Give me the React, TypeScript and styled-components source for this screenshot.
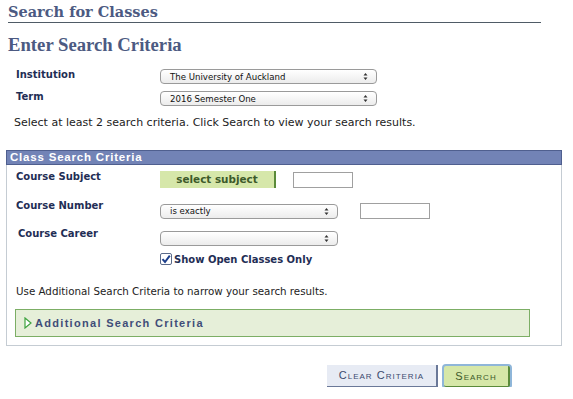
import styled, { createGlobalStyle } from 'styled-components';

const GlobalStyle = createGlobalStyle`
  html, body {
    margin: 0;
    padding: 0;
    background: #fff;
  }
  body {
    font-family: "DejaVu Sans", Verdana, sans-serif;
    color: #222;
  }
`;

interface SelectProps {
  value?: string;
  width: number;
}

const Select = ({ value = '', width }: SelectProps): JSX.Element => (
  <SelectBox $width={width}>
    <SelectText>{value}</SelectText>
    <SelectArrows viewBox="0 0 5 9">
      <path d="M0.5 3.5 L2.5 1 L4.5 3.5 Z M0.5 5.5 L2.5 8 L4.5 5.5 Z" />
    </SelectArrows>
  </SelectBox>
);

const App = (): JSX.Element => {
  return (
    <Page>
      <GlobalStyle />
      <PageTitle>Search for Classes</PageTitle>
      <SubTitle>Enter Search Criteria</SubTitle>

      <TopFields>
        <FieldRow>
          <Label>Institution</Label>
          <Select value="The University of Auckland" width={217} />
        </FieldRow>
        <FieldRow>
          <Label>Term</Label>
          <Select value="2016 Semester One" width={217} />
        </FieldRow>
      </TopFields>

      <Instructions>
        Select at least 2 search criteria. Click Search to view your search results.
      </Instructions>

      <CriteriaBox>
        <BoxHeader>Class Search Criteria</BoxHeader>
        <BoxBody>
          <FieldRow>
            <Label>Course Subject</Label>
            <SubjectButton>select subject</SubjectButton>
            <TextInput $width={60} $offset={17} />
          </FieldRow>
          <FieldRow $top={15}>
            <Label $shift={3}>Course Number</Label>
            <Select value="is exactly" width={178} />
            <TextInput $width={70} $offset={22} />
          </FieldRow>
          <FieldRow $top={12}>
            <Label $indent={2} $shift={3}>Course Career</Label>
            <Select width={178} />
          </FieldRow>
          <CheckRow>
            <CheckBox viewBox="0 0 12 12">
              <rect x="0.5" y="0.5" width="11" height="11" rx="1.5" fill="#fff" stroke="#5a6a8a" />
              <path d="M2.5 6.2 L5 9 L9.8 2.6" fill="none" stroke="#1c3f8c" strokeWidth="2" />
            </CheckBox>
            <CheckLabel>Show Open Classes Only</CheckLabel>
          </CheckRow>
          <Hint>Use Additional Search Criteria to narrow your search results.</Hint>
          <Additional>
            <Triangle viewBox="0 0 8 12">
              <path d="M1 1 L7 6 L1 11 Z" fill="#fff" stroke="#3fa33f" strokeWidth="1.2" />
            </Triangle>
            Additional Search Criteria
          </Additional>
        </BoxBody>
      </CriteriaBox>

      <Actions>
        <ClearButton>Clear Criteria</ClearButton>
        <SearchButton>Search</SearchButton>
      </Actions>
    </Page>
  );
};

export default App;

const Page = styled.div`
  padding: 3px 0 0 8px;
  width: 552px;
`;

const PageTitle = styled.h1`
  border-bottom: 1px solid #4f5b66;
  color: #4c5a82;
  font-family: "DejaVu Serif", Georgia, serif;
  font-size: 14.5px;
  font-weight: bold;
  margin: 0;
  padding-bottom: 2px;
  width: 533px;
`;

const SubTitle = styled.h2`
  color: #4c5a82;
  font-family: "Liberation Serif", "Times New Roman", serif;
  font-size: 18.7px;
  font-weight: bold;
  margin: 11px 0 0;
`;

const TopFields = styled.div`
  display: flex;
  flex-direction: column;
  gap: 7px;
  margin: 13px 0 0 8px;
`;

const FieldRow = styled.div<{ $top?: number }>`
  align-items: center;
  display: flex;
  margin-top: ${(p) => p.$top ?? 0}px;
`;

const Label = styled.div<{ $indent?: number; $shift?: number }>`
  align-self: flex-start;
  box-sizing: border-box;
  color: #1f2e55;
  flex-shrink: 0;
  font-size: 10px;
  font-weight: bold;
  margin-top: -${(p) => p.$shift ?? 0}px;
  padding-left: ${(p) => p.$indent ?? 0}px;
  width: 144px;
`;

const SelectBox = styled.div<{ $width: number }>`
  align-items: center;
  background: linear-gradient(#ffffff, #ececec);
  border: 1px solid #9a9a9a;
  border-radius: 4px;
  box-sizing: border-box;
  display: flex;
  height: 15px;
  justify-content: space-between;
  padding: 0 8px 0 9px;
  width: ${(p) => p.$width}px;
`;

const SelectText = styled.span`
  color: #111;
  font-size: 8.6px;
`;

const SelectArrows = styled.svg`
  fill: #333;
  height: 9px;
  width: 5px;
`;

const Instructions = styled.p`
  font-size: 11px;
  margin: 10px 0 0 6px;
`;

const CriteriaBox = styled.div`
  border: 1px solid #c5ccd3;
  margin: 21px 0 0 -2px;
  width: 554px;
`;

const BoxHeader = styled.div`
  background: #7283b6;
  border: 1px solid #4f5f8f;
  color: #fff;
  font-family: "Liberation Sans", Arial, sans-serif;
  font-size: 11.5px;
  font-weight: bold;
  height: 13px;
  letter-spacing: 0.8px;
  line-height: 13px;
  margin: -1px -1px 0;
  padding-left: 3px;
`;

const BoxBody = styled.div`
  padding: 6px 0 8px 9px;
`;

const SubjectButton = styled.div`
  background: #d6e7aa;
  border-right: 2px solid #5a8a3a;
  color: #3d5a2a;
  font-size: 10.4px;
  font-weight: bold;
  height: 17px;
  line-height: 17px;
  text-align: center;
  width: 114px;
`;

const TextInput = styled.div<{ $width: number; $offset: number }>`
  border: 1px solid #a0a0a0;
  box-sizing: border-box;
  height: 16px;
  margin-left: ${(p) => p.$offset}px;
  width: ${(p) => p.$width}px;
`;

const CheckRow = styled.div`
  align-items: center;
  display: flex;
  gap: 2px;
  margin: 7px 0 0 144px;
`;

const CheckBox = styled.svg`
  height: 12px;
  width: 12px;
`;

const CheckLabel = styled.span`
  color: #1f2e55;
  font-size: 10px;
  font-weight: bold;
`;

const Hint = styled.p`
  font-size: 10.3px;
  margin: 20px 0 0;
`;

const Additional = styled.div`
  align-items: center;
  background: #e6efd9;
  border: 1px solid #7cae65;
  color: #3f4d78;
  display: flex;
  font-family: "Liberation Sans", Arial, sans-serif;
  font-size: 11px;
  font-weight: bold;
  gap: 3px;
  height: 26px;
  letter-spacing: 1.3px;
  margin: 12px 0 0 -1px;
  padding-left: 8px;
  width: 505px;
`;

const Triangle = styled.svg`
  height: 12px;
  width: 8px;
`;

const Actions = styled.div`
  align-items: center;
  display: flex;
  gap: 6px;
  margin: 19px 0 0 319px;
`;

const ClearButton = styled.div`
  background: #e7ebf4;
  border-bottom: 1px solid #6a7898;
  border-right: 2px solid #6a7898;
  color: #3c4a6e;
  font-family: "Liberation Sans", Arial, sans-serif;
  font-size: 11px;
  font-variant: small-caps;
  height: 21px;
  letter-spacing: 1px;
  line-height: 21px;
  text-align: center;
  width: 109px;
`;

const SearchButton = styled.div`
  background: #d6e7a8;
  border-bottom: 1px solid #5a8a3a;
  border-right: 2px solid #5a8a3a;
  border-radius: 2px;
  box-shadow: 0 0 0 2px #8fb6d9;
  color: #3d5a2a;
  font-family: "Liberation Sans", Arial, sans-serif;
  font-size: 11px;
  font-variant: small-caps;
  height: 20px;
  letter-spacing: 1px;
  line-height: 20px;
  text-align: center;
  width: 64px;
`;
